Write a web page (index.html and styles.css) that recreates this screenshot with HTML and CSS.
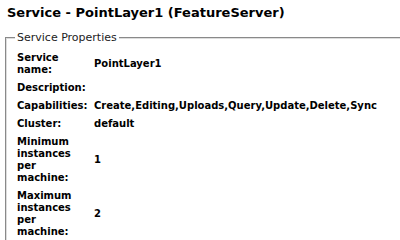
FILE: index.html
```html
<!DOCTYPE html>
<html lang="en">
<head>
    <meta charset="UTF-8">
    <title>Service - PointLayer1 (FeatureServer)</title>
    <link rel="stylesheet" href="styles.css">
</head>
<body>
    <h2 class="page-title">Service - PointLayer1 (FeatureServer)</h2>
    <fieldset class="props">
        <legend>Service Properties</legend>
        <table class="props-table">
            <tr>
                <td class="label">Service name:</td>
                <td class="value">PointLayer1</td>
            </tr>
            <tr>
                <td class="label">Description:</td>
                <td class="value"></td>
            </tr>
            <tr>
                <td class="label">Capabilities:</td>
                <td class="value">Create,Editing,Uploads,Query,Update,Delete,Sync</td>
            </tr>
            <tr>
                <td class="label">Cluster:</td>
                <td class="value">default</td>
            </tr>
            <tr>
                <td class="label">Minimum instances per machine:</td>
                <td class="value">1</td>
            </tr>
            <tr>
                <td class="label">Maximum instances per machine:</td>
                <td class="value">2</td>
            </tr>
        </table>
    </fieldset>
</body>
</html>
```

FILE: styles.css
```css
body {
    font-family: "DejaVu Sans", Verdana, sans-serif;
    font-size: 10px;
    color: #000;
    background: #fff;
    margin: 0;
    padding: 5px 0 0 5px;
    width: 460px;
}

.page-title {
    font-size: 13px;
    font-weight: bold;
    line-height: 15px;
    margin: 0 0 11px 2px;
}

.props {
    border: 2px groove #ddd;
    margin: 0;
    padding: 4px 7px 8px;
}

.props legend {
    font-size: 11px;
    line-height: 13px;
    padding: 0 2px;
    margin-left: 1px;
    color: #222;
}

.props-table {
    border-collapse: separate;
    border-spacing: 1px;
}

.props-table td {
    font-weight: bold;
    line-height: 12px;
    padding: 3px 2px 2px;
    vertical-align: middle;
}

.props-table .label {
    width: 72px;
}
```
